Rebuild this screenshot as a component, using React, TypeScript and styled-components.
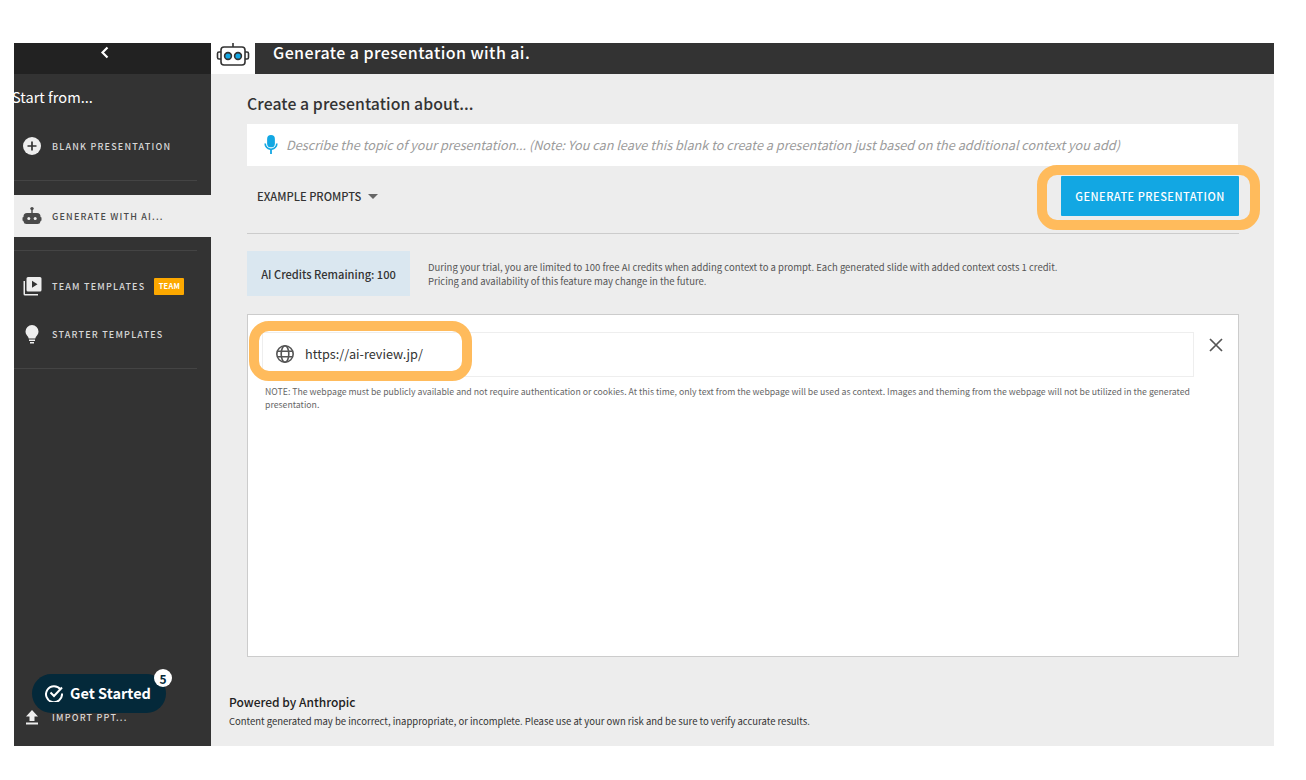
import React from "react";
import styled, { createGlobalStyle } from "styled-components";

const Global = createGlobalStyle`
  html, body { margin: 0; padding: 0; background: #fff; }
  body { font-family: "Noto Sans CJK JP", "Noto Sans", sans-serif; }
  * { box-sizing: border-box; }
`;
const Page = styled.div`
  width: 1306px; height: 780px; padding: 43px 32px 34px 14px; background: #fff; position: relative; overflow: hidden;
`;
const Frame = styled.div`
  width: 1260px; height: 703px; display: flex; background: #ededed; position: relative;
`;
const Side = styled.aside`
  width: 197px; flex: none; background: #333; display: flex; flex-direction: column; position: relative; overflow: hidden;
`;
const Collapse = styled.div`
  height: 31px; background: #222; display: flex; justify-content: center; color: #fff; padding: 2px 16px 0 0;
`;
const StartFrom = styled.div`
  color: #fff; font-size: 14.6px; line-height: 20px; font-weight: 400; margin: 13px 0 0 -2px; white-space: nowrap; height: 35px;
`;
const Item = styled.div<{ $active?: boolean }>`
  height: ${p => (p.$active ? 42 : 48)}px; display: flex; align-items: center; gap: 10px; padding-left: 8px;
  background: ${p => (p.$active ? "#ededed" : "transparent")};
  color: ${p => (p.$active ? "#4a4a4a" : "#d8d8d8")};
`;
const IconSlot = styled.span`
  width: 20px; height: 20px; display: flex; align-items: center; justify-content: center; flex: none;
`;
const ItemText = styled.span`
  font-size: 9px; line-height: 12px; font-weight: 500; letter-spacing: 1.2px; white-space: nowrap; margin-top: 1px;
`;
const Team = styled.span`
  background: #fca800; color: #fff; font-size: 7.5px; font-weight: 700; border-radius: 1px; width: 30px; text-align: center; height: 17px; line-height: 16px; letter-spacing: .2px; margin-left: -1px;
`;
const SideRule = styled.div<{ $top: number; $bottom?: number }>`
  width: 183px; height: 1px; background: #444; flex: none; margin-top: ${p => p.$top}px; margin-bottom: ${p => p.$bottom ?? 0}px;
`;
const Bottom = styled.div`
  margin-top: auto; padding-bottom: 5px;
`;
const Main = styled.main`
  flex: 1; min-width: 0; display: flex; flex-direction: column;
`;
const Top = styled.header`
  height: 31px; display: flex; flex: none;
`;
const RobotCell = styled.div`
  width: 44px; background: #fff; display: flex; align-items: flex-start; justify-content: center;
`;
const TopBar = styled.h1`
  flex: 1; margin: 0; background: #333; color: #fff; font-size: 16px; font-weight: 500; line-height: 19px; padding-left: 18px; letter-spacing: .42px;
`;
const Content = styled.div`
  padding: 17px 36px 0; flex: 1; display: flex; flex-direction: column;
`;
const Title = styled.h2`
  margin: 0 0 8px; font-size: 15.8px; line-height: 25px; font-weight: 500; color: #333; letter-spacing: .08px;
`;
const Prompt = styled.div`
  height: 42px; width: 991px; background: #fff; display: flex; align-items: center; padding: 0 0 2px 15px; gap: 6px;
  color: #9b9b9b; font-style: italic; font-size: 12.7px; white-space: nowrap;
`;
const Row = styled.div`
  width: 992px; height: 68px; display: flex; align-items: flex-start; justify-content: space-between; padding: 10px 0 0 10px; border-bottom: 1px solid #ccc;
`;
const Example = styled.div`
  height: 40px; display: flex; align-items: center; gap: 7px; font-size: 11.15px; font-weight: 500; color: #333;
`;
const Caret = styled.span`
  width: 0; height: 0; border-left: 5px solid transparent; border-right: 5px solid transparent; border-top: 5px solid #666; margin-top: 1px;
`;
const GenButton = styled.button`
  width: 178px; height: 40px; border: 0; background: #12a7e3; color: #fff; font: 500 11px/36px "Noto Sans CJK JP", sans-serif; letter-spacing: .5px; border-radius: 1px; padding: 0; position: relative;
`;
const Credits = styled.div`
  margin-top: 17px; display: flex; align-items: center; gap: 18px;
`;
const CreditBox = styled.div`
  width: 163px; height: 45px; background: #dae7f0; color: #333; display: flex; align-items: center; justify-content: center; font-size: 11.1px; font-weight: 500; white-space: nowrap;
`;
const Small = styled.p`
  margin: 0; color: #555; font-size: 9.5px; line-height: 14px; white-space: nowrap;
`;
const Box = styled.section`
  margin-top: 18px; width: 992px; height: 343px; background: #fff; border: 1px solid #ccc; padding: 17px 0 0 14px; position: relative;
`;
const UrlRow = styled.div`
  width: 932px; height: 45px; border: 1px solid #eee; display: flex; align-items: center; gap: 10px; padding: 0 0 2px 12px; font-size: 12.7px; color: #333;
`;
const Note = styled.p`
  margin: 8px 0 0 3px; width: 940px; color: #666; font-size: 8.73px; line-height: 13px;
`;
const Close = styled.span`
  position: absolute; right: 14px; top: 22px; color: #555; display: flex;
`;
const Footer = styled.footer`
  margin: 35px 0 0 -18px;
`;
const Powered = styled.div`
  font-size: 12px; font-weight: 500; color: #222; line-height: 19px;
`;
const Disclaim = styled.div`
  font-size: 9.5px; color: #333; line-height: 18px; margin-top: 1px;
`;
const Ring = styled.div<{ $x: number; $y: number; $w: number; $h: number }>`
  position: absolute; left: ${p => p.$x}px; top: ${p => p.$y}px; width: ${p => p.$w}px; height: ${p => p.$h}px;
  border: 10px solid #ffbb5c; border-radius: 20px; pointer-events: none;
`;
const Pill = styled.div`
  position: absolute; left: 32px; top: 674px; width: 134px; height: 39px; border-radius: 20px; background: #04293a; color: #fff;
  display: flex; align-items: center; gap: 7px; padding: 0 0 2px 13px; font-size: 14.5px; font-weight: 700; white-space: nowrap;
`;
const Badge = styled.span`
  position: absolute; right: -6px; top: -5px; width: 18px; height: 18px; border-radius: 50%; background: #fff; color: #04293a; font-size: 12px; font-weight: 700; display: flex; align-items: center; justify-content: center;
`;

const Robot = ({ c = "#4a4a4a" }: { c?: string }) => (
  <svg width="20" height="20" viewBox="0 0 20 20" fill={c}>
    <circle cx="10" cy="2.6" r="1.7" /><rect x="9.3" y="3" width="1.4" height="4" />
    <path d="M5 7h10a3.5 3.5 0 0 1 3.5 3.5V11l1 .5v3l-1 .5v.5A3 3 0 0 1 15.5 18h-11a3 3 0 0 1-3-2.5V15l-1-.5v-3l1-.5v-.5A3.5 3.5 0 0 1 5 7z" />
    <circle cx="6.8" cy="12.4" r="1.5" fill="#ededed" /><circle cx="13.2" cy="12.4" r="1.5" fill="#ededed" />
  </svg>
);

export default function App() {
  return (
    <Page>
      <Global />
      <Frame>
        <Side>
          <Collapse>
            <svg width="16" height="16" viewBox="0 0 16 16" fill="none" stroke="#fff" strokeWidth="2.2"><path d="M10.5 2.5 5.5 7.5l5 5" /></svg>
          </Collapse>
          <StartFrom>Start from...</StartFrom>
          <Item>
            <IconSlot>
              <svg width="18" height="18" viewBox="0 0 18 18"><circle cx="9" cy="9" r="9" fill="#eee" /><path d="M9 4.5v9M4.500 9h9" stroke="#333" strokeWidth="1.7" /></svg>
            </IconSlot>
            <ItemText>BLANK PRESENTATION</ItemText>
          </Item>
          <SideRule $top={10} $bottom={14} />
          <Item $active>
            <IconSlot><Robot /></IconSlot>
            <ItemText>GENERATE WITH AI...</ItemText>
          </Item>
          <SideRule $top={13} $bottom={11} />
          <Item>
            <IconSlot>
              <svg width="19" height="19" viewBox="0 0 19 19" fill="#eee">
                <path d="M5 0h12a1.500 1.500 0 0 1 1.500 1.500V13A1.500 1.500 0 0 1 17 14.500H5A1.500 1.500 0 0 1 3.500 13V1.500A1.500 1.500 0 0 1 5 0zM9 3.800v7l5.500-3.500z" fillRule="evenodd" />
                <path d="M.5 4H2v13h13v1.500H2A1.500 1.500 0 0 1 .5 17z" />
              </svg>
            </IconSlot>
            <ItemText>TEAM TEMPLATES</ItemText>
            <Team>TEAM</Team>
          </Item>
          <Item>
            <IconSlot>
              <svg width="16" height="19" viewBox="0 0 16 19" fill="#eee">
                <path d="M8 0a6.500 6.500 0 0 1 6.500 6.500c0 2.400-1.500 3.800-2.500 5.200-.4.600-.6 1.300-.7 1.800H4.700c-.1-.5-.3-1.200-.7-1.800C3 10.300 1.500 8.900 1.500 6.500A6.500 6.500 0 0 1 8 0z" />
                <rect x="5" y="14.500" width="6" height="1.500" /><rect x="6" y="17" width="4" height="1.500" />
              </svg>
            </IconSlot>
            <ItemText>STARTER TEMPLATES</ItemText>
          </Item>
          <SideRule $top={10} />
          <Bottom>
            <Item>
              <IconSlot>
                <svg width="16" height="16" viewBox="0 0 16 16" fill="#eee"><path d="M8 1 14 7.500h-3.500V12h-5V7.500H2z" /><rect x="2" y="13.500" width="12" height="2" /></svg>
              </IconSlot>
              <ItemText>IMPORT PPT...</ItemText>
            </Item>
          </Bottom>
        </Side>
        <Main>
          <Top>
            <RobotCell>
              <svg width="34" height="26" viewBox="0 0 34 26" fill="none" stroke="#333" strokeWidth="1.6">
                <path d="M17 0v4" />
                <rect x="5" y="4" width="24" height="18" rx="3" />
                <path d="M5 9H3a1.500 1.500 0 0 0-1.500 1.500v4A1.500 1.500 0 0 0 3 16h2M29 9h2a1.500 1.500 0 0 1 1.500 1.500v4A1.500 1.500 0 0 1 31 16h-2" />
                <circle cx="12" cy="13" r="3.400" fill="#12a7e3" /><circle cx="22" cy="13" r="3.400" fill="#12a7e3" />
              </svg>
            </RobotCell>
            <TopBar>Generate a presentation with ai.</TopBar>
          </Top>
          <Content>
            <Title>Create a presentation about...</Title>
            <Prompt>
              <svg width="18" height="20" viewBox="2 0 14 18" fill="#12a7e3">
                <rect x="5.500" y="1" width="7" height="11" rx="3.500" />
                <path d="M3 8.500h1.500a4.500 4.500 0 0 0 9 0H15a6 6 0 0 1-5.200 5.900V18h-1.600v-3.600A6 6 0 0 1 3 8.500z" />
              </svg>
              Describe the topic of your presentation... (Note: You can leave this blank to create a presentation just based on the additional context you add)
            </Prompt>
            <Row>
              <Example>EXAMPLE PROMPTS <Caret /></Example>
              <GenButton>GENERATE PRESENTATION</GenButton>
            </Row>
            <Credits>
              <CreditBox>AI Credits Remaining: 100</CreditBox>
              <Small>
                During your trial, you are limited to 100 free AI credits when adding context to a prompt. Each generated slide with added context costs 1 credit.<br />
                Pricing and availability of this feature may change in the future.
              </Small>
            </Credits>
            <Box>
              <UrlRow>
                <svg width="20" height="20" viewBox="0 0 20 20" fill="none" stroke="#555" strokeWidth="1.6">
                  <circle cx="10" cy="10" r="8.200" /><ellipse cx="10" cy="10" rx="3.800" ry="8.200" /><path d="M2 7.200h16M2 12.800h16" />
                </svg>
                https://ai-review.jp/
              </UrlRow>
              <Note>NOTE: The webpage must be publicly available and not require authentication or cookies. At this time, only text from the webpage will be used as context. Images and theming from the webpage will not be utilized in the generated presentation.</Note>
              <Close>
                <svg width="16" height="16" viewBox="0 0 16 16" stroke="#555" strokeWidth="1.700"><path d="M2 2l12 12M14 2 2 14" /></svg>
              </Close>
            </Box>
            <Footer>
              <Powered>Powered by Anthropic</Powered>
              <Disclaim>Content generated may be incorrect, inappropriate, or incomplete. Please use at your own risk and be sure to verify accurate results.</Disclaim>
            </Footer>
          </Content>
        </Main>
      </Frame>
      <Ring $x={1037} $y={165} $w={223} $h={65} />
      <Ring $x={249} $y={321} $w={223} $h={60} />
      <Pill>
        <svg width="18" height="18" viewBox="0 0 18 18" fill="none" stroke="#fff" strokeWidth="2"><path d="M15.500 5.500A8 8 0 1 0 17 9.500" /><path d="M5.500 8.500 9 12l8-8.500" /></svg>
        Get Started
        <Badge>5</Badge>
      </Pill>
    </Page>
  );
}
